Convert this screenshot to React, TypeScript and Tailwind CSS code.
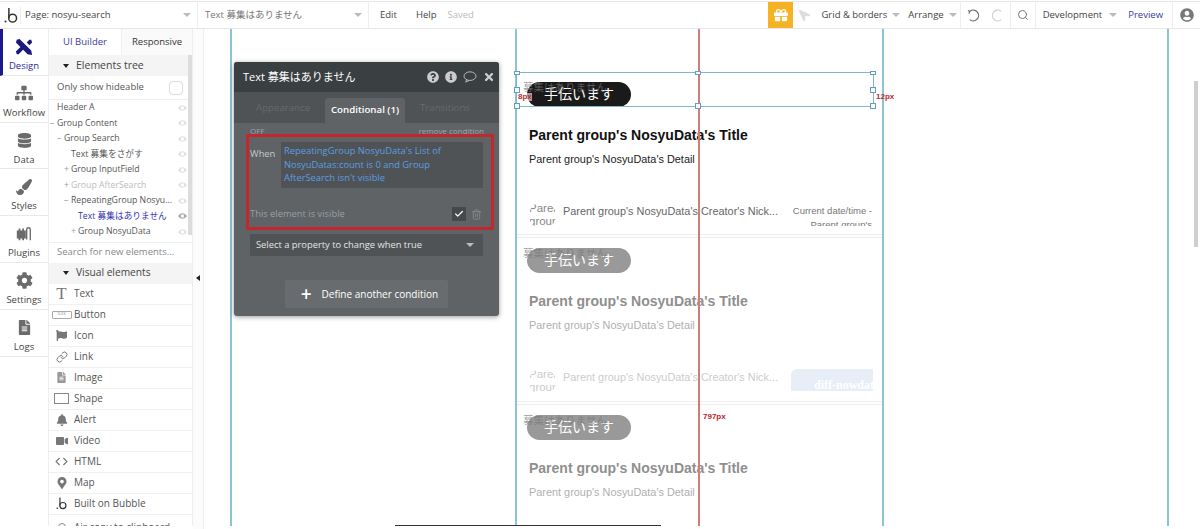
import { Check, Code, Link, Search, Trash2 } from "lucide-react";
import { FaBell, FaCog, FaDatabase, FaFileAlt, FaFlag, FaGift, FaInfoCircle, FaLocationArrow, FaMapMarkerAlt, FaPaintBrush, FaQuestionCircle, FaSitemap, FaTimes, FaUserCircle, FaVideo } from "react-icons/fa";
import type { ReactNode } from "react";

const font = { fontFamily: '"Open Sans", "Noto Sans CJK JP", sans-serif' };
const arial = { fontFamily: '"Liberation Sans", "Noto Sans CJK JP", sans-serif' };

function BubbleLogo({ className }: { className?: string }) {
  return (
    <svg viewBox="0 0 20 22" className={className}>
      <circle cx="2" cy="19" r="1.4" fill="#333" />
      <path d="M6.5 1v13.5" stroke="#333" strokeWidth="2" fill="none" />
      <circle cx="11.5" cy="14.5" r="5.2" stroke="#333" strokeWidth="2" fill="none" />
    </svg>
  );
}

function Caret() {
  return <span className="block h-0 w-0 border-x-[4px] border-t-[4px] border-x-transparent border-t-[#bbb]" />;
}

function RailItem({ icon, label, active }: { icon: ReactNode; label: string; active?: boolean }) {
  return (
    <div className={`flex h-[46.8px] shrink-0 flex-col items-center border-b border-[#e8e8e8] pt-[5px] ${active ? "border-l-[3px] border-l-[#1a1a8c] pr-[3px]" : ""}`}>
      <div className="flex h-[25px] items-center">{icon}</div>
      <span className={`text-[9.5px] leading-[14px] ${active ? "text-[#2b2b9c]" : "text-[#444]"}`}>{label}</span>
    </div>
  );
}

function TreeRow({ label, indent, mark, tone = "text-[#555]", eye = "text-[#e2e2e2]" }: { label: string; indent: number; mark?: string; tone?: string; eye?: string }) {
  return (
    <div className="flex h-[15.5px] items-center justify-between pr-[5px] text-[8.7px]" style={{ paddingLeft: indent }}>
      <span className={`whitespace-nowrap ${tone}`}>
        {mark && <span className="inline-block w-[7px] text-[#999]">{mark}</span>}
        {label}
      </span>
      <svg viewBox="0 0 16 10" className={`h-[6px] w-[9px] ${eye}`} fill="currentColor">
        <path d="M8 0C4 0 1.500 3 0 5c1.500 2 4 5 8 5s6.500-3 8-5c-1.500-2-4-5-8-5zm0 8a3 3 0 110-6 3 3 0 010 6z" />
      </svg>
    </div>
  );
}

function VisualRow({ icon, label, cut }: { icon: ReactNode; label: string; cut?: boolean }) {
  return (
    <div className={`flex h-[21px] shrink-0 items-center border-b border-[#f0f0f0] text-[10px] text-[#555] ${cut ? "pt-[6px]" : ""}`}>
      <div className="flex w-[25px] justify-center text-[#777]">{icon}</div>
      <span className="whitespace-nowrap">{label}</span>
    </div>
  );
}

function Card({ faded, last, first }: { faded?: boolean; last?: boolean; first?: boolean }) {
  return (
    <div className={`relative shrink-0 ${first ? "h-[166px]" : "h-[167px]"} ${last ? "" : "border-b-[4px] border-double border-[#eeeeee]"}`} style={arial}>
      <div className="relative flex items-start pl-[10px] pt-[10px]">
        <div className={`flex h-[25px] w-[104px] items-center justify-center rounded-full text-[14px] text-white ${faded ? "bg-[#999]" : "bg-[#1a1a1a]"}`}>
          手伝います
        </div>
      </div>
      {/* the hidden text sits on the same spot, so it shows through the button */}
      <span className="absolute left-[6px] top-[8px] whitespace-nowrap text-[10.5px] text-[#777]/70">募集はありません</span>
      <div className={`pl-[12px] pt-[19px] text-[14px] font-bold leading-[18px] ${faded ? "text-[#8f8f8f]" : "text-[#111]"}`}>Parent group's NosyuData's Title</div>
      <div className={`pl-[12px] pt-[8px] text-[10.9px] leading-[14px] ${faded ? "text-[#b0b0b0]" : "text-[#222]"}`}>Parent group's NosyuData's Detail</div>
      {!last && (
        <div className="flex items-start pl-[12px] pr-[9px] pt-[36px]">
          <div className={`h-[27px] w-[27px] shrink-0 overflow-hidden whitespace-pre rounded-full text-[11.5px] leading-[13px] ${faded ? "text-[#ccc]" : "text-[#888]"}`}>{"Parent\ngroup"}</div>
          <div className={`shrink-0 whitespace-nowrap pl-[7px] pt-[1px] text-[10.9px] ${faded ? "text-[#ccc]" : "text-[#666]"}`}>Parent group's NosyuData's Creator's Nick...</div>
          {faded ? (
            <div className="relative mt-[1px] ml-auto h-[22px] w-[82px] shrink-0 overflow-hidden rounded-tl-md bg-[#e8eef7]">
              <span className="absolute left-[23px] top-[7px] whitespace-nowrap text-[12px] font-bold text-white" style={{ fontFamily: '"Liberation Serif", serif' }}>diff-nowdate</span>
            </div>
          ) : (
            <div className="ml-auto mr-px mt-[2px] h-[22px] w-[82px] shrink-0 overflow-hidden text-right text-[9.5px] leading-[13.5px] text-[#777]">Current date/time - Parent group's</div>
          )}
        </div>
      )}
    </div>
  );
}

function Handle({ className }: { className: string }) {
  return <span className={`absolute h-[6px] w-[6px] border border-[#5f9fbf] bg-white ${className}`} />;
}

export default function App() {
  return (
    <div className="relative flex h-[529px] w-[1200px] flex-col overflow-hidden bg-white" style={font}>
      {/* top bar */}
      <div className="mt-px flex h-[28px] shrink-0 items-center whitespace-nowrap border-y border-[#e6e6e6] text-[9.5px] text-[#444]">
        <div className="flex w-[21px] shrink-0 justify-center border-r border-[#eee] pl-[2px]"><BubbleLogo className="h-[17px] w-[15px]" /></div>
        <div className="flex h-full w-[177px] shrink-0 items-center justify-between border-r border-[#eee] pl-[4px] pr-[6px]"><span>Page: nosyu-search</span><Caret /></div>
        <div className="flex h-full w-[171px] shrink-0 items-center justify-between border-r border-[#eee] pl-[7px] pr-[6px] text-[#777]"><span>Text 募集はありません</span><Caret /></div>
        <span className="pl-[11px]">Edit</span>
        <span className="pl-[19px]">Help</span>
        <span className="pl-[11px] text-[#bbb]">Saved</span>
        <div className="flex-1" />
        <div className="flex h-full w-[25px] shrink-0 items-center justify-center bg-[#f5b324] text-white"><FaGift size={14} /></div>
        <FaLocationArrow size={11} className="ml-[6px] -scale-x-100 text-[#ddd]" />
        <span className="pl-[11px]">Grid &amp; borders</span>
        <span className="pl-[5px]"><Caret /></span>
        <span className="pl-[8px]">Arrange</span>
        <span className="flex h-full items-center border-r border-[#eee] pl-[5px] pr-[3px]"><Caret /></span>
        <div className="flex h-full items-center gap-[11px] border-r border-[#eee] pl-[6px] pr-[6px]">
          <svg viewBox="0 0 14 14" className="h-[13px] w-[13px]" fill="none" stroke="#666" strokeWidth="1.2"><path d="M3 2.500A5.800 5.800 0 113 11.500" /><path d="M1 1.500l2 1-1 2.500" /></svg>
          <svg viewBox="0 0 14 14" className="h-[13px] w-[13px]" fill="none" stroke="#ccc" strokeWidth="1.2"><path d="M11 2.500A5.800 5.800 0 1011 11.500" /></svg>
        </div>
        <div className="flex h-full items-center border-r border-[#eee] px-[6px]"><Search size={12} className="text-[#777]" /></div>
        <span className="pl-[7px]">Development</span>
        <span className="pl-[7px]"><Caret /></span>
        <span className="pl-[11px] text-[#3b3b9c]">Preview</span>
        <div className="ml-[9px] flex h-full w-[28px] items-center justify-center border-l border-[#eee]"><FaUserCircle size={14} className="text-[#777]" /></div>
      </div>

      <div className="flex min-h-0 flex-1">
        {/* left rail */}
        <div className="flex w-[48px] shrink-0 flex-col">
          <RailItem active label="Design" icon={<svg viewBox="0 0 20 20" className="h-[18px] w-[18px]" fill="#1a1a7c"><path d="M2 2l3-1 13 13 1 5-5-1L1 5zM18 2l1 3-3 3-3-3 3-3zM2 18l-1-3 5-5 3 3-5 5z" /></svg>} />
          <RailItem label="Workflow" icon={<FaSitemap size={18} className="text-[#6b6b6b]" />} />
          <RailItem label="Data" icon={<FaDatabase size={15} className="text-[#6b6b6b]" />} />
          <RailItem label="Styles" icon={<FaPaintBrush size={16} className="text-[#6b6b6b]" />} />
          <RailItem label="Plugins" icon={<svg viewBox="0 0 20 20" className="h-[18px] w-[18px]" fill="none"><path d="M3 7h8v7H3zM5 14v3M9 14v3M5 7V4M9 7V4" stroke="#6b6b6b" strokeWidth="2" fill="#6b6b6b" /><path d="M13 16V5a2 2 0 014 0v12" stroke="#6b6b6b" strokeWidth="1.5" /></svg>} />
          <RailItem label="Settings" icon={<FaCog size={17} className="text-[#6b6b6b]" />} />
          <RailItem label="Logs" icon={<FaFileAlt size={15} className="text-[#6b6b6b]" />} />
        </div>

        {/* elements panel */}
        <div className="relative flex h-[497px] w-[145px] shrink-0 flex-col overflow-hidden border-x border-[#eee]">
          <div className="flex h-[26px] shrink-0 items-center text-[9.5px]">
            <span className="w-[72px] text-center text-[#3b3b9c]">UI Builder</span>
            <span className="flex h-full flex-1 items-center justify-center border-l border-[#eee] bg-[#fafafa] text-[#333]">Responsive</span>
          </div>
          <div className="flex h-[21px] shrink-0 items-center bg-[#f4f4f4] pl-[14px] text-[10.5px] text-[#444]">
            <span className="mr-[7px] h-0 w-0 border-x-[3.5px] border-t-[4px] border-x-transparent border-t-[#222]" />
            Elements tree
          </div>
          <div className="flex h-[24px] shrink-0 items-center justify-between border-b border-[#eee] pl-[8px] pr-[9px] text-[9.5px] text-[#555]">
            Only show hideable
            <span className="h-[14px] w-[14px] rounded-sm border border-[#ddd]" />
          </div>
          <div className="flex-none">
            <TreeRow label="Header A" indent={8} />
            <TreeRow label="Group Content" indent={1} mark="–" />
            <TreeRow label="Group Search" indent={8} mark="–" />
            <TreeRow label="Text 募集をさがす" indent={22} />
            <TreeRow label="Group InputField" indent={15} mark="+" />
            <TreeRow label="Group AfterSearch" indent={15} mark="+" tone="text-[#bbb]" />
            <TreeRow label="RepeatingGroup Nosyu..." indent={15} mark="–" />
            <TreeRow label="Text 募集はありません" indent={29} tone="text-[#3434b0]" eye="text-[#aaa]" />
            <TreeRow label="Group NosyuData" indent={22} mark="+" />
          </div>
          <div className="mt-[2px] flex h-[21px] shrink-0 items-center border-t border-[#eee] pl-[8px] text-[9.5px] text-[#888]">Search for new elements...</div>
          <div className="flex h-[21px] shrink-0 items-center bg-[#f4f4f4] pl-[14px] text-[10.2px] text-[#444]">
            <span className="mr-[7px] h-0 w-0 border-x-[3.5px] border-t-[4px] border-x-transparent border-t-[#222]" />
            Visual elements
          </div>
          <div className="flex flex-col">
            <VisualRow label="Text" icon={<span className="text-[17px] leading-none" style={{ fontFamily: '"Liberation Serif", serif' }}>T</span>} />
            <VisualRow label="Button" icon={<span className="flex h-[8px] w-[20px] items-center justify-center rounded-[1px] border border-[#aaa] text-[3px] leading-none">CLICK</span>} />
            <VisualRow label="Icon" icon={<FaFlag size={11} />} />
            <VisualRow label="Link" icon={<Link size={12} />} />
            <VisualRow label="Image" icon={<FaFileAlt size={11} className="text-[#999]" />} />
            <VisualRow label="Shape" icon={<span className="block h-[11px] w-[15px] border border-[#888]" />} />
            <VisualRow label="Alert" icon={<FaBell size={12} />} />
            <VisualRow label="Video" icon={<FaVideo size={12} />} />
            <VisualRow label="HTML" icon={<Code size={13} />} />
            <VisualRow label="Map" icon={<FaMapMarkerAlt size={12} />} />
            <VisualRow label="Built on Bubble" icon={<BubbleLogo className="h-[13px] w-[12px]" />} />
            <VisualRow label="Air copy to clipboard" cut icon={<span className="block h-[10px] w-[8px] rounded-sm border border-[#888]" />} />
          </div>
          {/* tree scrollbar */}
          <div className="absolute right-0 top-[26px] h-[180px] w-[4px] bg-[#dcdcdc]" />
        </div>

        {/* collapse gutter */}
        <div className="flex w-[11px] shrink-0 items-center justify-center border-r border-[#eee] bg-[#fcfcfc] pb-[2px]">
          <span className="h-0 w-0 border-y-[3.5px] border-r-[4px] border-y-transparent border-r-[#222]" />
        </div>

        {/* canvas */}
        <div className="relative h-[497px] min-w-0 flex-1 overflow-hidden">
          <div className="absolute left-[26px] top-0 h-full w-[2px] bg-[#8cc4d2]" />
          <div className="absolute left-[963px] top-0 h-full w-[2px] bg-[#8cc4d2]" />
          {/* page scrollbar */}
          <div className="absolute left-[990px] top-[52px] h-[166px] w-[4px] bg-[#cfcfcf]" />

          <div className="ml-[311px] h-full w-[369px] overflow-hidden border-x-2 border-[#8cc4d2]">
            <div className="h-[43px]" />
            <Card first />
            <Card faded />
            <Card faded last />
          </div>

          {/* red centre line */}
          <div className="absolute left-[494px] top-0 h-full w-[2px] bg-[#d47a7d]" />
          <span className="absolute left-[499px] top-[382px] text-[8px] font-bold text-[#b5262c]" style={arial}>797px</span>

          {/* selected element */}
          <div className="absolute left-[312px] top-[43px] h-[35px] w-[358px] border border-[#7fb9c9]">
            <Handle className="-left-[3px] -top-[2px] !h-[4px]" />
            <Handle className="left-[178px] -top-[2px] !h-[4px]" />
            <Handle className="-right-[3px] -top-[2px] !h-[4px]" />
            <Handle className="-left-[3px] -bottom-[3px]" />
            <Handle className="left-[178px] -bottom-[3px]" />
            <Handle className="-right-[3px] -bottom-[3px]" />
            <Handle className="-left-[3px] top-[14px]" />
            <Handle className="-right-[3px] top-[14px]" />
          </div>
          <span className="absolute left-[314px] top-[64px] bg-white/60 text-[8px] font-bold leading-none text-[#c02a30]" style={arial}>8px</span>
          <span className="absolute left-[672px] top-[64px] text-[8px] font-bold leading-none text-[#c02a30]" style={arial}>12px</span>

          {/* property editor */}
          <div className="absolute left-[30px] top-[33px] h-[254px] w-[265px] overflow-hidden rounded-[3px] bg-[#5f6366] shadow-[0_1px_5px_rgba(0,0,0,0.4)]">
            <div className="flex h-[30px] items-center justify-between bg-[#3a3f42] pl-[9px] pr-[4px] text-[11px] text-white">
              <span>Text 募集はありません</span>
              <div className="flex items-center gap-[6px] text-[#ccc]">
                <FaQuestionCircle size={12} />
                <FaInfoCircle size={12} />
                <svg viewBox="0 0 16 14" className="h-[12px] w-[14px]" fill="none" stroke="currentColor"><ellipse cx="8" cy="6" rx="7" ry="5" /><path d="M4 10l-1 3 4-2" /></svg>
                <FaTimes size={12} />
              </div>
            </div>
            <div className="flex h-[31px] items-end bg-[#4f5356] pl-[22px] text-[9.7px]">
              <span className="w-[69px] pb-[7px] text-[#666a6d]">Appearance</span>
              <span className="flex h-[25px] w-[80px] items-center justify-center rounded-t-[3px] bg-[#5f6366] font-semibold text-white">Conditional (1)</span>
              <span className="pb-[7px] pl-[15px] text-[#666a6d]">Transitions</span>
            </div>
            <div className="flex h-[11px] items-end justify-between overflow-hidden pl-[16px] pr-[15px] text-[8px] leading-[6px] text-[#a0a4a6]"><span>OFF</span><span>remove condition</span></div>
            <div className="ml-[12px] mr-[5px] h-[96px] rounded-[1px] border-[3px] border-[#c1272d] pl-[1px] pr-[8px] pt-[5px]">
              <div className="flex items-start text-[9.35px] leading-[13.7px]">
                <span className="w-[31px] pt-[5px] text-[#c5c8ca]">When</span>
                <div className="h-[46px] flex-1 bg-[#4f5356] px-[3px] pt-[2px] text-[#5b9ee0]">RepeatingGroup NosyuData's List of NosyuDatas:count is 0 and Group AfterSearch isn't visible</div>
              </div>
              <div className="mt-[19px] flex items-center justify-between text-[9.35px] text-[#9a9ea1]">
                <span>This element is visible</span>
                <div className="flex items-center gap-[5px] pr-px">
                  <span className="flex h-[14px] w-[14px] items-center justify-center bg-[#45494c]"><Check size={10} strokeWidth={3} className="text-white" /></span>
                  <Trash2 size={11} className="text-[#85898c]" />
                </div>
              </div>
            </div>
            <div className="mx-[16px] mt-[4px] flex h-[22px] items-center justify-between bg-[#4f5356] pl-[6px] pr-[9px] text-[9.35px] text-[#e4e4e4]">
              Select a property to change when true
              <Caret />
            </div>
            <div className="mx-[51px] mt-[24px] flex h-[28px] items-center justify-center gap-[10px] rounded-[2px] bg-[#686c6f] pl-[6px] text-[10px] text-white">
              <span className="text-[19px] font-semibold leading-none">+</span>
              Define another condition
            </div>
          </div>

          {/* horizontal scroll thumb */}
          <div className="absolute bottom-0 left-[191px] h-[1.5px] w-[266px] bg-[#333]" />
        </div>
      </div>
    </div>
  );
}
